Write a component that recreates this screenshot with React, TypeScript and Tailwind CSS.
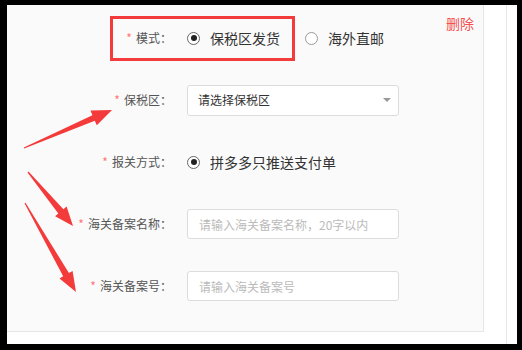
type Pt = [number, number];

// tapered annotation arrow: thin tail, wide head
function arrowPoints(t: Pt, p: Pt, headLen = 20, headW = 8, shaftW = 3.2) {
  const dx = p[0] - t[0];
  const dy = p[1] - t[1];
  const len = Math.hypot(dx, dy);
  const ux = dx / len;
  const uy = dy / len;
  const nx = -uy;
  const ny = ux;
  const bx = p[0] - ux * headLen;
  const by = p[1] - uy * headLen;
  const pts: Pt[] = [
    [t[0] + nx * 0.6, t[1] + ny * 0.6],
    [bx + nx * shaftW, by + ny * shaftW],
    [bx + nx * headW, by + ny * headW],
    p,
    [bx - nx * headW, by - ny * headW],
    [bx - nx * shaftW, by - ny * shaftW],
    [t[0] - nx * 0.6, t[1] - ny * 0.6],
  ];
  return pts.map((q) => `${q[0].toFixed(1)},${q[1].toFixed(1)}`).join(" ");
}

function Radio({ checked }: { checked?: boolean }) {
  return (
    <span
      className={`flex h-[13px] w-[13px] shrink-0 items-center justify-center rounded-full border bg-white ${
        checked ? "border-[#666]" : "border-[#999]"
      }`}
    >
      {checked && <span className="h-[6px] w-[6px] rounded-full bg-[#222]" />}
    </span>
  );
}

function Label({ text }: { text: string }) {
  return (
    <div className="w-[165px] shrink-0 text-right text-[12px] leading-[16px] text-[#555]">
      <span className="mr-[4px] text-[#f77]">*</span>
      {text}：
    </div>
  );
}

export default function App() {
  return (
    <div className="relative h-[350px] w-[522px] bg-black pt-[5px] pr-[5px] pb-[6px] pl-[7px] font-['Noto_Sans_CJK_SC',sans-serif]">
      <div className="flex h-full bg-white">
        <div className="relative h-[327px] w-[477px] shrink-0 border-r border-b border-[#e6e6e6] bg-[#fafafa]">
          <span className="absolute top-[8px] right-[9px] text-[14px] leading-[20px] text-[#f5504f]">
            删除
          </span>

          <div className="flex flex-col gap-[30px] pt-[17px]">
            <div className="flex h-[32px] items-center">
              <Label text="模式" />
              <div className="ml-[15px] flex items-center">
                <Radio checked />
                <span className="ml-[10px] text-[14px] text-[#333]">保税区发货</span>
                <span className="ml-[25px]">
                  <Radio />
                </span>
                <span className="ml-[10px] text-[14px] text-[#333]">海外直邮</span>
              </div>
            </div>

            <div className="flex h-[32px] items-center">
              <Label text="保税区" />
              <div className="ml-[15px] flex h-[31px] w-[212px] items-center justify-between rounded-[3px] border border-[#dcdcdc] bg-white pr-[7px] pl-[10px]">
                <span className="text-[12px] text-[#333]">请选择保税区</span>
                <span className="h-0 w-0 border-x-[4.5px] border-t-[4.5px] border-x-transparent border-t-[#999]" />
              </div>
            </div>

            <div className="flex h-[32px] items-center">
              <Label text="报关方式" />
              <div className="ml-[15px] flex items-center">
                <Radio checked />
                <span className="ml-[10px] text-[14px] text-[#333]">拼多多只推送支付单</span>
              </div>
            </div>

            <div className="flex h-[32px] items-center">
              <Label text="海关备案名称" />
              <input
                className="ml-[15px] h-[30px] w-[212px] rounded-[3px] border border-[#dcdcdc] bg-white px-[11px] text-[12px] text-[#333] outline-none placeholder:text-[#bbb]"
                placeholder="请输入海关备案名称，20字以内"
              />
            </div>

            <div className="flex h-[32px] items-center">
              <Label text="海关备案号" />
              <input
                className="ml-[15px] h-[30px] w-[212px] rounded-[3px] border border-[#dcdcdc] bg-white px-[11px] text-[12px] text-[#333] outline-none placeholder:text-[#bbb]"
                placeholder="请输入海关备案号"
              />
            </div>
          </div>

          {/* highlight box */}
          <div className="pointer-events-none absolute top-[11px] left-[103px] h-[45px] w-[185px] border-[3px] border-[#f43b3b]" />
        </div>
        <div className="ml-[22px] w-px bg-[#e6e6ef]" />
      </div>

      <svg
        className="pointer-events-none absolute inset-0"
        width={522}
        height={350}
        viewBox="0 0 522 350"
      >
        <polygon points={arrowPoints([24, 148], [112, 110], 20, 8, 3)} fill="#f43b3b" />
        <polygon points={arrowPoints([28, 172], [73, 226], 19, 7.5, 3.3)} fill="#f43b3b" />
        <polygon points={arrowPoints([25, 203], [76, 292], 20, 7.5, 3.3)} fill="#f43b3b" />
      </svg>
    </div>
  );
}
